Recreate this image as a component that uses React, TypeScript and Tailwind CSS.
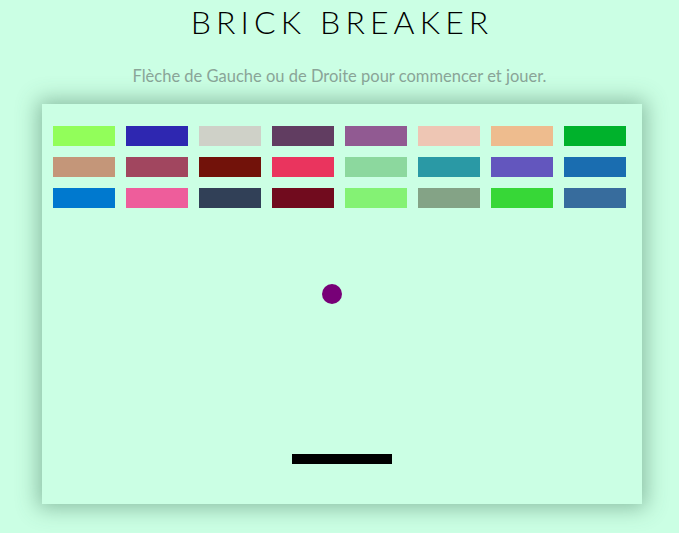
import React from "react";

const colors = [
  "#92FE5A", "#2E27B1", "#CFD1C8", "#613D61", "#915A92", "#EEC6B4", "#EEBC8E", "#00B22C",
  "#C49679", "#A1465F", "#72120A", "#EA345E", "#8CD89E", "#2A99A5", "#6356BE", "#1A6DB0",
  "#0079CF", "#EE5D9B", "#314057", "#710B1E", "#84F274", "#84A386", "#37D737", "#376C9D",
];

export default function App() {
  return (
    <div className="min-h-[533px] w-full bg-[#CBFFE4] flex flex-col items-center" style={{ fontFamily: "Lato, 'Noto Sans', sans-serif" }}>
      <h1 className="mt-[2px] text-[32px] leading-[40px] font-light tracking-[0.16em] pl-[0.16em] text-black">BRICK BREAKER</h1>
      <p className="mt-[24px] text-[16.5px] leading-[20px] text-[#8aa598]">Flèche de Gauche ou de Droite pour commencer et jouer.</p>
      <div className="relative mt-[18px] ml-[5px] w-[600px] h-[400px] bg-[#CBFFE4] shadow-[0_0_20px_4px_rgba(60,110,85,0.45)]">
        <div className="grid grid-cols-8 gap-x-[11px] gap-y-[11px] pl-[11px] pt-[22px] w-max">
          {colors.map((c, i) => (
            <div key={i} className="w-[62px] h-[20px]" style={{ backgroundColor: c }} />
          ))}
        </div>
        <div className="absolute left-[280px] top-[180px] w-[20px] h-[20px] rounded-full bg-[#770077]" />
        <div className="absolute left-[250px] top-[350px] w-[100px] h-[10px] bg-black" />
      </div>
    </div>
  );
}
